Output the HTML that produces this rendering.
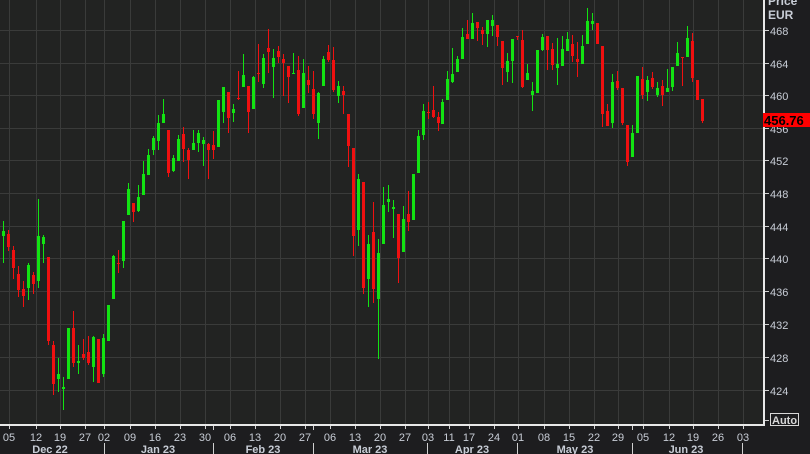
<!DOCTYPE html>
<html><head><meta charset="utf-8"><style>
html,body{margin:0;padding:0;background:#1d1d1f;width:810px;height:454px;overflow:hidden;font-family:"Liberation Sans",sans-serif}
svg{display:block}
text{font-family:"Liberation Sans",sans-serif}
</style></head><body>
<svg width="810" height="454" viewBox="0 0 810 454" xmlns="http://www.w3.org/2000/svg">
<rect x="0" y="0" width="810" height="454" fill="#1d1d1f"/>
<rect x="0" y="0" width="763" height="425" fill="#222322"/>
<g stroke="#3a3b3a" stroke-width="1">
<path d="M0 30.5H763M0 63.5H763M0 95.5H763M0 128.5H763M0 160.5H763M0 193.5H763M0 226.5H763M0 258.5H763M0 291.5H763M0 324.5H763M0 357.5H763M0 390.5H763"/>
<path d="M9.5 0V425M36.5 0V425M60.5 0V425M85.5 0V425M104.5 0V425M130.5 0V425M155.5 0V425M180.5 0V425M205.5 0V425M230.5 0V425M255.5 0V425M280.5 0V425M305.5 0V425M330.5 0V425M355.5 0V425M380.5 0V425M405.5 0V425M428.5 0V425M449.5 0V425M469.5 0V425M494.5 0V425M518.5 0V425M544.5 0V425M569.5 0V425M594.5 0V425M618.5 0V425M643.5 0V425M669.5 0V425M693.5 0V425M718.5 0V425M743.5 0V425"/>
</g>
<g id="c">
<g transform="translate(0,90)">
<rect x="3" y="131" width="1" height="42" fill="#12e312"/><rect x="2" y="141" width="3" height="5" fill="#12e312"/>
<rect x="8" y="140" width="1" height="21" fill="#f01010"/><rect x="7" y="144" width="3" height="13" fill="#f01010"/>
<rect x="13" y="156" width="1" height="33" fill="#f01010"/><rect x="12" y="160" width="3" height="18" fill="#f01010"/>
<rect x="18" y="176" width="1" height="31" fill="#f01010"/><rect x="17" y="184" width="3" height="16" fill="#f01010"/>
<rect x="23" y="191" width="1" height="26" fill="#f01010"/><rect x="22" y="199" width="3" height="7" fill="#f01010"/>
<rect x="28" y="173" width="1" height="37" fill="#12e312"/><rect x="27" y="175" width="3" height="23" fill="#12e312"/>
<rect x="33" y="182" width="1" height="22" fill="#f01010"/><rect x="32" y="185" width="3" height="9" fill="#f01010"/>
<rect x="38" y="109" width="1" height="89" fill="#12e312"/><rect x="37" y="146" width="3" height="45" fill="#12e312"/>
<rect x="43" y="145" width="1" height="28" fill="#12e312"/><rect x="42" y="147" width="3" height="7" fill="#12e312"/>
<rect x="48" y="167" width="1" height="88" fill="#f01010"/><rect x="47" y="167" width="3" height="84" fill="#f01010"/>
<rect x="53" y="251" width="1" height="54" fill="#f01010"/><rect x="52" y="255" width="3" height="39" fill="#f01010"/>
<rect x="58" y="268" width="1" height="34" fill="#12e312"/><rect x="57" y="284" width="3" height="5" fill="#12e312"/>
<rect x="63" y="287" width="1" height="33" fill="#12e312"/><rect x="62" y="297" width="3" height="2" fill="#12e312"/>
<rect x="68" y="238" width="1" height="51" fill="#12e312"/><rect x="67" y="238" width="3" height="51" fill="#12e312"/>
<rect x="73" y="221" width="1" height="56" fill="#f01010"/><rect x="72" y="238" width="3" height="35" fill="#f01010"/>
<rect x="78" y="255" width="1" height="29" fill="#12e312"/><rect x="77" y="271" width="3" height="2" fill="#12e312"/>
<rect x="83" y="249" width="1" height="21" fill="#f01010"/><rect x="82" y="264" width="3" height="4" fill="#f01010"/>
<rect x="88" y="246" width="1" height="29" fill="#f01010"/><rect x="87" y="262" width="3" height="11" fill="#f01010"/>
<rect x="93" y="246" width="1" height="46" fill="#12e312"/><rect x="92" y="247" width="3" height="30" fill="#12e312"/>
<rect x="98" y="249" width="1" height="44" fill="#f01010"/><rect x="97" y="249" width="3" height="44" fill="#f01010"/>
<rect x="103" y="244" width="1" height="43" fill="#12e312"/><rect x="102" y="248" width="3" height="36" fill="#12e312"/>
<rect x="108" y="215" width="1" height="36" fill="#12e312"/><rect x="107" y="215" width="3" height="36" fill="#12e312"/>
<rect x="113" y="165" width="1" height="44" fill="#12e312"/><rect x="112" y="166" width="3" height="43" fill="#12e312"/>
<rect x="118" y="160" width="1" height="23" fill="#f01010"/><rect x="117" y="173" width="3" height="1" fill="#f01010"/>
<rect x="123" y="131" width="1" height="47" fill="#12e312"/><rect x="122" y="131" width="3" height="40" fill="#12e312"/>
<rect x="128" y="93" width="1" height="32" fill="#12e312"/><rect x="127" y="99" width="3" height="26" fill="#12e312"/>
<rect x="133" y="113" width="1" height="19" fill="#f01010"/><rect x="132" y="113" width="3" height="9" fill="#f01010"/>
<rect x="138" y="95" width="1" height="27" fill="#12e312"/><rect x="137" y="107" width="3" height="14" fill="#12e312"/>
<rect x="143" y="71" width="1" height="34" fill="#12e312"/><rect x="142" y="84" width="3" height="21" fill="#12e312"/>
<rect x="148" y="59" width="1" height="26" fill="#12e312"/><rect x="147" y="65" width="3" height="20" fill="#12e312"/>
<rect x="153" y="46" width="1" height="19" fill="#12e312"/><rect x="152" y="48" width="3" height="12" fill="#12e312"/>
<rect x="158" y="25" width="1" height="35" fill="#12e312"/><rect x="157" y="33" width="3" height="18" fill="#12e312"/>
<rect x="163" y="9" width="1" height="24" fill="#12e312"/><rect x="162" y="24" width="3" height="9" fill="#12e312"/>
<rect x="168" y="40" width="1" height="47" fill="#f01010"/><rect x="167" y="40" width="3" height="43" fill="#f01010"/>
<rect x="173" y="65" width="1" height="17" fill="#12e312"/><rect x="172" y="68" width="3" height="13" fill="#12e312"/>
<rect x="178" y="45" width="1" height="26" fill="#12e312"/><rect x="177" y="49" width="3" height="22" fill="#12e312"/>
<rect x="183" y="37" width="1" height="35" fill="#f01010"/><rect x="182" y="44" width="3" height="15" fill="#f01010"/>
<rect x="188" y="58" width="1" height="31" fill="#f01010"/><rect x="187" y="60" width="3" height="10" fill="#f01010"/>
<rect x="193" y="40" width="1" height="20" fill="#12e312"/><rect x="192" y="53" width="3" height="7" fill="#12e312"/>
<rect x="198" y="40" width="1" height="22" fill="#12e312"/><rect x="197" y="43" width="3" height="10" fill="#12e312"/>
<rect x="203" y="47" width="1" height="29" fill="#12e312"/><rect x="202" y="50" width="3" height="4" fill="#12e312"/>
<rect x="208" y="53" width="1" height="36" fill="#f01010"/><rect x="207" y="54" width="3" height="6" fill="#f01010"/>
<rect x="213" y="41" width="1" height="28" fill="#f01010"/><rect x="212" y="55" width="3" height="5" fill="#f01010"/>
<rect x="218" y="10" width="1" height="47" fill="#12e312"/><rect x="217" y="10" width="3" height="47" fill="#12e312"/>
</g>
<g transform="translate(0,20)">
<rect x="223" y="67" width="1" height="36" fill="#12e312"/><rect x="222" y="67" width="3" height="25" fill="#12e312"/>
<rect x="228" y="72" width="1" height="41" fill="#f01010"/><rect x="227" y="72" width="3" height="26" fill="#f01010"/>
<rect x="233" y="84" width="1" height="18" fill="#12e312"/><rect x="232" y="89" width="3" height="4" fill="#12e312"/>
<rect x="238" y="51" width="1" height="29" fill="#f01010"/><rect x="237" y="78" width="3" height="1" fill="#f01010"/>
<rect x="243" y="34" width="1" height="33" fill="#12e312"/><rect x="242" y="55" width="3" height="12" fill="#12e312"/>
<rect x="248" y="66" width="1" height="47" fill="#f01010"/><rect x="247" y="66" width="3" height="26" fill="#f01010"/>
<rect x="253" y="56" width="1" height="33" fill="#12e312"/><rect x="252" y="57" width="3" height="32" fill="#12e312"/>
<rect x="258" y="24" width="1" height="38" fill="#f01010"/><rect x="257" y="53" width="3" height="1" fill="#f01010"/>
<rect x="263" y="34" width="1" height="34" fill="#12e312"/><rect x="262" y="38" width="3" height="26" fill="#12e312"/>
<rect x="268" y="9" width="1" height="44" fill="#f01010"/><rect x="267" y="28" width="3" height="4" fill="#f01010"/>
<rect x="273" y="29" width="1" height="49" fill="#12e312"/><rect x="272" y="38" width="3" height="9" fill="#12e312"/>
<rect x="278" y="26" width="1" height="17" fill="#f01010"/><rect x="277" y="31" width="3" height="6" fill="#f01010"/>
<rect x="283" y="34" width="1" height="42" fill="#f01010"/><rect x="282" y="39" width="3" height="4" fill="#f01010"/>
<rect x="288" y="46" width="1" height="37" fill="#f01010"/><rect x="287" y="46" width="3" height="11" fill="#f01010"/>
<rect x="293" y="33" width="1" height="21" fill="#12e312"/><rect x="292" y="53" width="3" height="1" fill="#12e312"/>
<rect x="298" y="36" width="1" height="60" fill="#f01010"/><rect x="297" y="50" width="3" height="44" fill="#f01010"/>
<rect x="303" y="39" width="1" height="49" fill="#12e312"/><rect x="302" y="53" width="3" height="35" fill="#12e312"/>
<rect x="308" y="46" width="1" height="27" fill="#f01010"/><rect x="307" y="60" width="3" height="5" fill="#f01010"/>
<rect x="313" y="51" width="1" height="48" fill="#f01010"/><rect x="312" y="69" width="3" height="25" fill="#f01010"/>
<rect x="318" y="72" width="1" height="47" fill="#12e312"/><rect x="317" y="73" width="3" height="30" fill="#12e312"/>
<rect x="323" y="36" width="1" height="30" fill="#12e312"/><rect x="322" y="39" width="3" height="27" fill="#12e312"/>
<rect x="328" y="25" width="1" height="17" fill="#f01010"/><rect x="327" y="32" width="3" height="8" fill="#f01010"/>
<rect x="333" y="27" width="1" height="45" fill="#f01010"/><rect x="332" y="40" width="3" height="30" fill="#f01010"/>
<rect x="338" y="61" width="1" height="22" fill="#12e312"/><rect x="337" y="66" width="3" height="10" fill="#12e312"/>
<rect x="343" y="66" width="1" height="28" fill="#f01010"/><rect x="342" y="71" width="3" height="4" fill="#f01010"/>
<rect x="348" y="94" width="1" height="53" fill="#f01010"/><rect x="347" y="94" width="3" height="32" fill="#f01010"/>
<rect x="353" y="128" width="1" height="108" fill="#f01010"/><rect x="352" y="128" width="3" height="88" fill="#f01010"/>
<rect x="358" y="154" width="1" height="72" fill="#12e312"/><rect x="357" y="159" width="3" height="51" fill="#12e312"/>
<rect x="363" y="162" width="1" height="112" fill="#f01010"/><rect x="362" y="162" width="3" height="106" fill="#f01010"/>
<rect x="368" y="215" width="1" height="72" fill="#12e312"/><rect x="367" y="224" width="3" height="35" fill="#12e312"/>
<rect x="373" y="182" width="1" height="101" fill="#f01010"/><rect x="372" y="212" width="3" height="57" fill="#f01010"/>
<rect x="378" y="219" width="1" height="120" fill="#12e312"/><rect x="377" y="233" width="3" height="46" fill="#12e312"/>
<rect x="383" y="167" width="1" height="57" fill="#12e312"/><rect x="382" y="185" width="3" height="39" fill="#12e312"/>
<rect x="388" y="165" width="1" height="27" fill="#12e312"/><rect x="387" y="179" width="3" height="3" fill="#12e312"/>
<rect x="393" y="180" width="1" height="38" fill="#12e312"/><rect x="392" y="187" width="3" height="2" fill="#12e312"/>
<rect x="398" y="194" width="1" height="69" fill="#f01010"/><rect x="397" y="194" width="3" height="44" fill="#f01010"/>
<rect x="403" y="186" width="1" height="46" fill="#12e312"/><rect x="402" y="199" width="3" height="33" fill="#12e312"/>
<rect x="408" y="171" width="1" height="40" fill="#f01010"/><rect x="407" y="194" width="3" height="8" fill="#f01010"/>
<rect x="413" y="154" width="1" height="46" fill="#12e312"/><rect x="412" y="154" width="3" height="46" fill="#12e312"/>
<rect x="418" y="110" width="1" height="43" fill="#12e312"/><rect x="417" y="116" width="3" height="37" fill="#12e312"/>
<rect x="423" y="84" width="1" height="36" fill="#12e312"/><rect x="422" y="91" width="3" height="24" fill="#12e312"/>
<rect x="428" y="82" width="1" height="17" fill="#f01010"/><rect x="427" y="92" width="3" height="1" fill="#f01010"/>
<rect x="433" y="66" width="1" height="32" fill="#f01010"/><rect x="432" y="90" width="3" height="7" fill="#f01010"/>
<rect x="438" y="92" width="1" height="19" fill="#f01010"/><rect x="437" y="97" width="3" height="6" fill="#f01010"/>
</g>
<rect x="442" y="99" width="1" height="25" fill="#12e312"/><rect x="441" y="102" width="3" height="22" fill="#12e312"/>
<rect x="447" y="71" width="1" height="29" fill="#12e312"/><rect x="446" y="79" width="3" height="21" fill="#12e312"/>
<rect x="452" y="48" width="1" height="35" fill="#12e312"/><rect x="451" y="74" width="3" height="8" fill="#12e312"/>
<rect x="457" y="56" width="1" height="16" fill="#12e312"/><rect x="456" y="59" width="3" height="13" fill="#12e312"/>
<rect x="462" y="28" width="1" height="31" fill="#12e312"/><rect x="461" y="37" width="3" height="22" fill="#12e312"/>
<rect x="467" y="20" width="1" height="19" fill="#f01010"/><rect x="466" y="34" width="3" height="5" fill="#f01010"/>
<rect x="472" y="13" width="1" height="26" fill="#12e312"/><rect x="471" y="23" width="3" height="16" fill="#12e312"/>
<rect x="477" y="22" width="1" height="19" fill="#f01010"/><rect x="476" y="22" width="3" height="6" fill="#f01010"/>
<rect x="482" y="27" width="1" height="18" fill="#f01010"/><rect x="481" y="30" width="3" height="4" fill="#f01010"/>
<rect x="487" y="20" width="1" height="27" fill="#12e312"/><rect x="486" y="20" width="3" height="14" fill="#12e312"/>
<rect x="492" y="15" width="1" height="21" fill="#12e312"/><rect x="491" y="20" width="3" height="6" fill="#12e312"/>
<rect x="497" y="25" width="1" height="21" fill="#f01010"/><rect x="496" y="25" width="3" height="12" fill="#f01010"/>
<rect x="502" y="41" width="1" height="44" fill="#f01010"/><rect x="501" y="41" width="3" height="27" fill="#f01010"/>
<rect x="507" y="53" width="1" height="29" fill="#12e312"/><rect x="506" y="61" width="3" height="11" fill="#12e312"/>
<rect x="512" y="39" width="1" height="44" fill="#12e312"/><rect x="511" y="39" width="3" height="22" fill="#12e312"/>
<rect x="517" y="36" width="1" height="4" fill="#f01010"/><rect x="516" y="36" width="3" height="1" fill="#f01010"/>
<rect x="522" y="30" width="1" height="58" fill="#f01010"/><rect x="521" y="40" width="3" height="47" fill="#f01010"/>
<rect x="527" y="64" width="1" height="16" fill="#12e312"/><rect x="526" y="73" width="3" height="7" fill="#12e312"/>
<rect x="532" y="82" width="1" height="29" fill="#12e312"/><rect x="531" y="91" width="3" height="4" fill="#12e312"/>
<rect x="537" y="50" width="1" height="43" fill="#12e312"/><rect x="536" y="50" width="3" height="43" fill="#12e312"/>
<rect x="542" y="34" width="1" height="17" fill="#12e312"/><rect x="541" y="37" width="3" height="13" fill="#12e312"/>
<rect x="547" y="36" width="1" height="34" fill="#f01010"/><rect x="546" y="36" width="3" height="14" fill="#f01010"/>
<rect x="552" y="43" width="1" height="27" fill="#f01010"/><rect x="551" y="49" width="3" height="16" fill="#f01010"/>
<rect x="557" y="38" width="1" height="47" fill="#12e312"/><rect x="556" y="64" width="3" height="4" fill="#12e312"/>
<rect x="562" y="36" width="1" height="30" fill="#12e312"/><rect x="561" y="49" width="3" height="17" fill="#12e312"/>
<rect x="567" y="32" width="1" height="19" fill="#12e312"/><rect x="566" y="39" width="3" height="12" fill="#12e312"/>
<rect x="572" y="35" width="1" height="27" fill="#f01010"/><rect x="571" y="44" width="3" height="12" fill="#f01010"/>
<rect x="577" y="42" width="1" height="35" fill="#f01010"/><rect x="576" y="59" width="3" height="3" fill="#f01010"/>
<rect x="582" y="35" width="1" height="29" fill="#12e312"/><rect x="581" y="46" width="3" height="18" fill="#12e312"/>
<rect x="587" y="8" width="1" height="36" fill="#12e312"/><rect x="586" y="21" width="3" height="23" fill="#12e312"/>
<rect x="592" y="13" width="1" height="17" fill="#12e312"/><rect x="591" y="21" width="3" height="3" fill="#12e312"/>
<rect x="597" y="23" width="1" height="21" fill="#f01010"/><rect x="596" y="23" width="3" height="21" fill="#f01010"/>
<rect x="602" y="46" width="1" height="81" fill="#f01010"/><rect x="601" y="46" width="3" height="68" fill="#f01010"/>
<rect x="607" y="104" width="1" height="22" fill="#f01010"/><rect x="606" y="111" width="3" height="15" fill="#f01010"/>
<rect x="612" y="74" width="1" height="54" fill="#12e312"/><rect x="611" y="82" width="3" height="41" fill="#12e312"/>
<rect x="617" y="71" width="1" height="19" fill="#f01010"/><rect x="616" y="81" width="3" height="7" fill="#f01010"/>
<rect x="622" y="88" width="1" height="37" fill="#f01010"/><rect x="621" y="88" width="3" height="35" fill="#f01010"/>
<rect x="627" y="125" width="1" height="41" fill="#f01010"/><rect x="626" y="125" width="3" height="37" fill="#f01010"/>
<rect x="632" y="125" width="1" height="32" fill="#12e312"/><rect x="631" y="133" width="3" height="24" fill="#12e312"/>
<rect x="637" y="76" width="1" height="57" fill="#12e312"/><rect x="636" y="76" width="3" height="57" fill="#12e312"/>
<rect x="642" y="67" width="1" height="32" fill="#f01010"/><rect x="641" y="79" width="3" height="16" fill="#f01010"/>
<rect x="647" y="76" width="1" height="25" fill="#12e312"/><rect x="646" y="80" width="3" height="12" fill="#12e312"/>
<rect x="652" y="72" width="1" height="17" fill="#f01010"/><rect x="651" y="78" width="3" height="9" fill="#f01010"/>
<rect x="657" y="82" width="1" height="15" fill="#12e312"/><rect x="656" y="88" width="3" height="7" fill="#12e312"/>
<rect x="662" y="80" width="1" height="26" fill="#f01010"/><rect x="661" y="86" width="3" height="9" fill="#f01010"/>
<rect x="667" y="69" width="1" height="23" fill="#12e312"/><rect x="666" y="88" width="3" height="4" fill="#12e312"/>
<rect x="672" y="67" width="1" height="24" fill="#12e312"/><rect x="671" y="67" width="3" height="20" fill="#12e312"/>
<rect x="677" y="42" width="1" height="24" fill="#12e312"/><rect x="676" y="53" width="3" height="13" fill="#12e312"/>
<rect x="682" y="57" width="1" height="29" fill="#f01010"/><rect x="681" y="57" width="3" height="1" fill="#f01010"/>
<rect x="687" y="26" width="1" height="31" fill="#12e312"/><rect x="686" y="38" width="3" height="19" fill="#12e312"/>
<rect x="692" y="33" width="1" height="49" fill="#f01010"/><rect x="691" y="41" width="3" height="37" fill="#f01010"/>
<rect x="697" y="80" width="1" height="20" fill="#f01010"/><rect x="696" y="80" width="3" height="20" fill="#f01010"/>
<rect x="702" y="99" width="1" height="24" fill="#f01010"/><rect x="701" y="99" width="3" height="22" fill="#f01010"/>
</g>
<!-- axes -->
<rect x="763" y="0" width="2" height="426" fill="#e8e8e8"/>
<rect x="0" y="424" width="765" height="2" fill="#e8e8e8"/>
<g stroke="#d0d0d0" stroke-width="1">
<path d="M765 30.5h4M765 63.5h4M765 95.5h4M765 128.5h4M765 160.5h4M765 193.5h4M765 226.5h4M765 258.5h4M765 291.5h4M765 324.5h4M765 357.5h4M765 390.5h4M765 420.5h4"/>
<path d="M9.5 426v3M36.5 426v3M60.5 426v3M85.5 426v3M104.5 426v3M130.5 426v3M155.5 426v3M180.5 426v3M205.5 426v3M230.5 426v3M255.5 426v3M280.5 426v3M305.5 426v3M330.5 426v3M355.5 426v3M380.5 426v3M405.5 426v3M428.5 426v3M449.5 426v3M469.5 426v3M494.5 426v3M518.5 426v3M544.5 426v3M569.5 426v3M594.5 426v3M618.5 426v3M643.5 426v3M669.5 426v3M693.5 426v3M718.5 426v3M743.5 426v3"/>
<path d="M104.5 443v11M213.5 426v4M213.5 443v11M313.5 426v4M313.5 443v11M427.5 443v11M517.5 443v11M632.5 426v4M632.5 443v11M742.5 443v11"/>
</g>
<g fill="#c8cdd6" font-size="11">
<text x="768" y="5" font-weight="bold" font-size="12">Price</text>
<text x="768" y="19" font-weight="bold" font-size="12">EUR</text>
<text x="770" y="35">468</text><text x="770" y="68">464</text><text x="770" y="100">460</text><text x="770" y="133">456</text>
<text x="770" y="165">452</text><text x="770" y="198">448</text><text x="770" y="231">444</text><text x="770" y="263">440</text>
<text x="770" y="296">436</text><text x="770" y="329">432</text><text x="770" y="362">428</text><text x="770" y="395">424</text>
</g>
<rect x="763" y="113" width="47" height="14" fill="#ff0000"/>
<text x="764" y="125" font-size="13" font-weight="bold" fill="#000">456.76</text>
<rect x="770.5" y="413.5" width="28" height="12" fill="none" stroke="#d8d8d8"/>
<text x="772" y="424" font-size="11" font-weight="bold" fill="#d8d8d8">Auto</text>
<g fill="#c8cdd6" font-size="11" text-anchor="middle">
<text x="9" y="441">05</text><text x="36" y="441">12</text><text x="60" y="441">19</text><text x="85" y="441">27</text><text x="104" y="441">02</text><text x="130" y="441">09</text><text x="155" y="441">16</text><text x="180" y="441">23</text><text x="205" y="441">30</text><text x="230" y="441">06</text><text x="255" y="441">13</text><text x="280" y="441">20</text><text x="305" y="441">27</text><text x="330" y="441">06</text><text x="355" y="441">13</text><text x="380" y="441">20</text><text x="405" y="441">27</text><text x="428" y="441">03</text><text x="449" y="441">11</text><text x="469" y="441">17</text><text x="494" y="441">24</text><text x="518" y="441">01</text><text x="544" y="441">08</text><text x="569" y="441">15</text><text x="594" y="441">22</text><text x="618" y="441">29</text><text x="643" y="441">05</text><text x="669" y="441">12</text><text x="693" y="441">19</text><text x="718" y="441">26</text><text x="743" y="441">03</text>
</g>
<g fill="#c8cdd6" font-size="11" font-weight="bold" text-anchor="middle">
<text x="50" y="453">Dec 22</text><text x="158" y="453">Jan 23</text><text x="263" y="453">Feb 23</text><text x="370" y="453">Mar 23</text><text x="472" y="453">Apr 23</text><text x="575" y="453">May 23</text><text x="686" y="453">Jun 23</text>
</g>
</svg>
</body></html>
